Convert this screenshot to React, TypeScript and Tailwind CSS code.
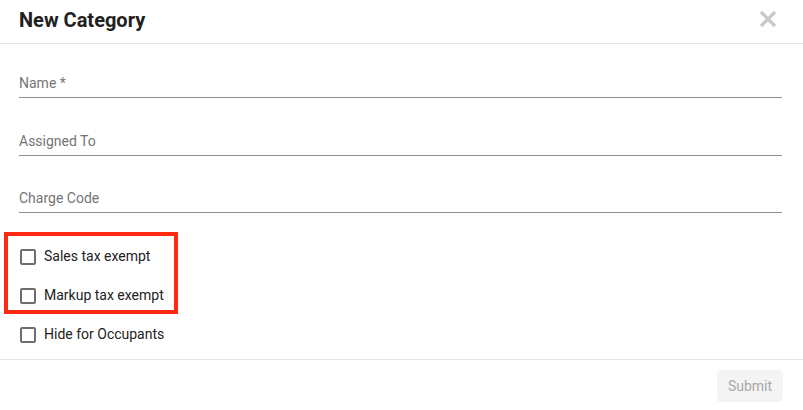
const fields = ['Name *', 'Assigned To', 'Charge Code']

function Checkbox({ label }: { label: string }) {
  return (
    <label className="flex items-center h-[39px]">
      <span className="w-4 h-4 border-2 border-[#6e6e6e] rounded-[2px] mr-[8px] bg-white" />
      <span className="text-[14px] text-[#222222]">{label}</span>
    </label>
  )
}

export default function App() {
  return (
    <div className="w-[803px] h-[410px] bg-white flex flex-col font-['Roboto','Liberation_Sans',sans-serif]">
      <div className="h-[44px] px-[19px] flex items-center justify-between border-b border-[#e4e4e4] shrink-0">
        <h2 className="text-[20px] font-bold text-[#212121] leading-none -mt-[3px]">New Category</h2>
        <svg viewBox="0 0 18 18" className="w-[18px] h-[18px] -mt-[6px] mr-[7px] stroke-[#c9c9c9]" strokeWidth={3.2}>
          <path d="M2 2 16 16M16 2 2 16" />
        </svg>
      </div>

      <div className="flex-1 px-[19px] pr-[21px] pt-[29px]">
        <div className="flex flex-col gap-[32.5px]">
          {fields.map((f) => (
            <div key={f} className="border-b border-[#8f8f8f] pb-[4px]">
              <span className="block text-[14px] leading-[20px] text-[#757575]">{f}</span>
            </div>
          ))}
        </div>

        <div className="relative mt-[24px] pl-[1px]">
          <div className="absolute left-[-15px] top-[-5px] w-[174px] h-[82px] border-4 border-[#ff2a12] pointer-events-none" />
          <Checkbox label="Sales tax exempt" />
          <Checkbox label="Markup tax exempt" />
          <Checkbox label="Hide for Occupants" />
        </div>
      </div>

      <div className="h-[51px] border-t border-[#e4e4e4] flex items-start justify-end pr-[20px] pt-[10px] shrink-0">
        <button className="h-[32px] w-[66px] rounded-[4px] bg-[#f4f4f4] text-[14px] text-[#a8a8a8]">Submit</button>
      </div>
    </div>
  )
}
